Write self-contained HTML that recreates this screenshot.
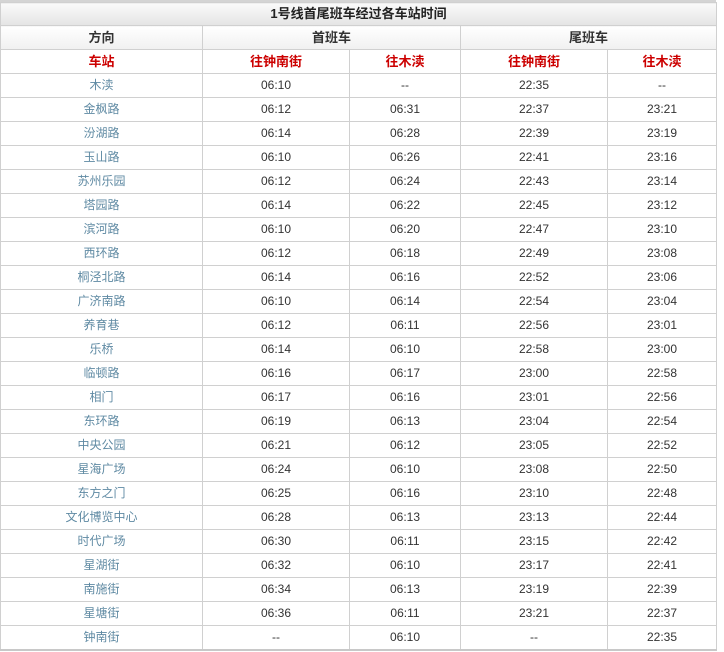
<!DOCTYPE html>
<html><head><meta charset="utf-8"><style>
body{margin:0;background:#fff;width:724px;height:652px;overflow:hidden;font-family:"Liberation Sans","Noto Sans CJK SC",sans-serif;}
.top{position:absolute;left:0;top:0;width:716px;height:2px;background:#d4d4d4;}
table{position:absolute;left:0;top:2px;border-collapse:collapse;table-layout:fixed;width:716px;border:1px solid #c8c8c8;border-bottom:2px solid #c8c8c8;}
td{border:1px solid #d0d0d0;height:23px;padding:0;text-align:center;font-size:12px;color:#333;line-height:23px;}
td.s{color:#5f8aa3;}
tr.t td{height:22px;line-height:22px;background:linear-gradient(#fafafa,#e4e4e4);font-weight:bold;font-size:13px;color:#222;}
tr.h td{background:linear-gradient(#fff,#f0f0f0);font-weight:bold;font-size:13px;color:#333;}
tr.r td{color:#cc0000;font-weight:bold;font-size:13px;}
</style></head><body>
<div class="top"></div>
<table>
<col style="width:202px"><col style="width:147px"><col style="width:111px"><col style="width:147px"><col style="width:109px">
<tr class="t"><td colspan="5">1号线首尾班车经过各车站时间</td></tr>
<tr class="h"><td>方向</td><td colspan="2">首班车</td><td colspan="2">尾班车</td></tr>
<tr class="r"><td>车站</td><td>往钟南街</td><td>往木渎</td><td>往钟南街</td><td>往木渎</td></tr>
<tr><td class="s">木渎</td><td>06:10</td><td>--</td><td>22:35</td><td>--</td></tr>
<tr><td class="s">金枫路</td><td>06:12</td><td>06:31</td><td>22:37</td><td>23:21</td></tr>
<tr><td class="s">汾湖路</td><td>06:14</td><td>06:28</td><td>22:39</td><td>23:19</td></tr>
<tr><td class="s">玉山路</td><td>06:10</td><td>06:26</td><td>22:41</td><td>23:16</td></tr>
<tr><td class="s">苏州乐园</td><td>06:12</td><td>06:24</td><td>22:43</td><td>23:14</td></tr>
<tr><td class="s">塔园路</td><td>06:14</td><td>06:22</td><td>22:45</td><td>23:12</td></tr>
<tr><td class="s">滨河路</td><td>06:10</td><td>06:20</td><td>22:47</td><td>23:10</td></tr>
<tr><td class="s">西环路</td><td>06:12</td><td>06:18</td><td>22:49</td><td>23:08</td></tr>
<tr><td class="s">桐泾北路</td><td>06:14</td><td>06:16</td><td>22:52</td><td>23:06</td></tr>
<tr><td class="s">广济南路</td><td>06:10</td><td>06:14</td><td>22:54</td><td>23:04</td></tr>
<tr><td class="s">养育巷</td><td>06:12</td><td>06:11</td><td>22:56</td><td>23:01</td></tr>
<tr><td class="s">乐桥</td><td>06:14</td><td>06:10</td><td>22:58</td><td>23:00</td></tr>
<tr><td class="s">临顿路</td><td>06:16</td><td>06:17</td><td>23:00</td><td>22:58</td></tr>
<tr><td class="s">相门</td><td>06:17</td><td>06:16</td><td>23:01</td><td>22:56</td></tr>
<tr><td class="s">东环路</td><td>06:19</td><td>06:13</td><td>23:04</td><td>22:54</td></tr>
<tr><td class="s">中央公园</td><td>06:21</td><td>06:12</td><td>23:05</td><td>22:52</td></tr>
<tr><td class="s">星海广场</td><td>06:24</td><td>06:10</td><td>23:08</td><td>22:50</td></tr>
<tr><td class="s">东方之门</td><td>06:25</td><td>06:16</td><td>23:10</td><td>22:48</td></tr>
<tr><td class="s">文化博览中心</td><td>06:28</td><td>06:13</td><td>23:13</td><td>22:44</td></tr>
<tr><td class="s">时代广场</td><td>06:30</td><td>06:11</td><td>23:15</td><td>22:42</td></tr>
<tr><td class="s">星湖街</td><td>06:32</td><td>06:10</td><td>23:17</td><td>22:41</td></tr>
<tr><td class="s">南施街</td><td>06:34</td><td>06:13</td><td>23:19</td><td>22:39</td></tr>
<tr><td class="s">星塘街</td><td>06:36</td><td>06:11</td><td>23:21</td><td>22:37</td></tr>
<tr><td class="s">钟南街</td><td>--</td><td>06:10</td><td>--</td><td>22:35</td></tr>
</table>
</body></html>
